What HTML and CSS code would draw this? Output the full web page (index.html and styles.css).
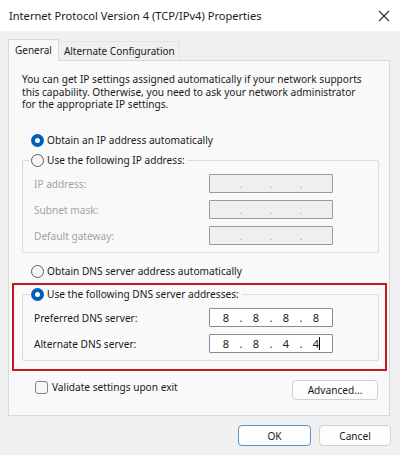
FILE: index.html
```html
<!DOCTYPE html>
<html lang="en">
<head>
<meta charset="utf-8">
<title>Internet Protocol Version 4 (TCP/IPv4) Properties</title>
<link rel="stylesheet" href="styles.css">
</head>
<body>
<div class="window">
  <div class="titlebar">
    <span class="title">Internet Protocol Version 4 (TCP/IPv4) Properties</span>
    <svg class="close" width="12" height="12" viewBox="0 0 12 12" aria-hidden="true">
      <path d="M1 1 L11 11 M11 1 L1 11" stroke="#2b2b2b" stroke-width="1.1" fill="none"/>
    </svg>
  </div>
  <div class="content">
    <div class="tabs">
      <div class="tab active">General</div>
      <div class="tab">Alternate Configuration</div>
    </div>
    <div class="panel">
      <p class="intro">You can get IP settings assigned automatically if your network supports<br>this capability. Otherwise, you need to ask your network administrator<br>for the appropriate IP settings.</p>

      <div class="radio-row ip-auto"><span class="radio checked"></span><span>Obtain an IP address automatically</span></div>

      <div class="group ip-group">
        <div class="legend"><span class="radio"></span><span>Use the following IP address:</span></div>
        <div class="fields">
          <div class="field disabled">
            <span class="field-label">IP address:</span>
            <div class="ipbox"><span class="seg"></span><span class="dot">.</span><span class="seg"></span><span class="dot">.</span><span class="seg"></span><span class="dot">.</span><span class="seg"></span></div>
          </div>
          <div class="field disabled">
            <span class="field-label">Subnet mask:</span>
            <div class="ipbox"><span class="seg"></span><span class="dot">.</span><span class="seg"></span><span class="dot">.</span><span class="seg"></span><span class="dot">.</span><span class="seg"></span></div>
          </div>
          <div class="field disabled">
            <span class="field-label">Default gateway:</span>
            <div class="ipbox"><span class="seg"></span><span class="dot">.</span><span class="seg"></span><span class="dot">.</span><span class="seg"></span><span class="dot">.</span><span class="seg"></span></div>
          </div>
        </div>
      </div>

      <div class="radio-row dns-auto"><span class="radio"></span><span>Obtain DNS server address automatically</span></div>

      <div class="group dns-group">
        <div class="legend"><span class="radio checked"></span><span>Use the following DNS server addresses:</span></div>
        <div class="fields">
          <div class="field">
            <span class="field-label">Preferred DNS server:</span>
            <div class="ipbox"><span class="seg">8</span><span class="dot">.</span><span class="seg">8</span><span class="dot">.</span><span class="seg">8</span><span class="dot">.</span><span class="seg">8</span></div>
          </div>
          <div class="field">
            <span class="field-label">Alternate DNS server:</span>
            <div class="ipbox"><span class="seg">8</span><span class="dot">.</span><span class="seg">8</span><span class="dot">.</span><span class="seg">4</span><span class="dot">.</span><span class="seg">4<span class="caret"></span></span></div>
          </div>
        </div>
      </div>

      <div class="bottom-row">
        <div class="check-row"><span class="checkbox"></span><span>Validate settings upon exit</span></div>
        <div class="btn advanced">Advanced...</div>
      </div>

      <div class="highlight"></div>
    </div>
    <div class="actions">
      <div class="btn primary">OK</div>
      <div class="btn">Cancel</div>
    </div>
  </div>
</div>
</body>
</html>
```

FILE: styles.css
```css
* { box-sizing: border-box; }

html, body {
  margin: 0;
  padding: 0;
}

body {
  width: 400px;
  height: 455px;
  overflow: hidden;
  background: #f0f0f0;
  font-family: "Noto Sans", "Open Sans", sans-serif;
  font-size: 10.15px;
  color: #1a1a1a;
}

.window {
  width: 400px;
  height: 455px;
  background: #f0f0f0;
}

.titlebar {
  height: 31px;
  background: #ffffff;
  display: flex;
  align-items: center;
  justify-content: space-between;
  padding: 0 10px 0 9px;
}

.title {
  font-size: 11.1px;
  color: #1a1a1a;
}

.close {
  display: block;
}

.content {
  padding: 8px 9px 0 8px;
}

.tabs {
  display: flex;
  align-items: flex-end;
  height: 21px;
}

.tab {
  height: 19px;
  padding: 0 4px 0 5px;
  display: flex;
  align-items: center;
  border: 1px solid #e3e3e3;
  border-bottom: none;
  border-left: none;
  background: #f0f0f0;
  font-size: 10px;
}

.tab.active {
  height: 22px;
  margin-bottom: -1px;
  padding: 0 6px 2px 6px;
  background: #f9f9f9;
  border-left: 1px solid #d9d9d9;
  border-color: #d9d9d9;
  position: relative;
  z-index: 1;
}

.panel {
  position: relative;
  width: 382px;
  height: 356px;
  background: #f9f9f9;
  border: 1px solid #d9d9d9;
}

.intro {
  margin: 0;
  padding: 12px 0 0 13px;
  line-height: 12.5px;
  white-space: nowrap;
}

.radio-row,
.legend,
.check-row {
  display: flex;
  align-items: center;
  height: 16px;
  gap: 3px;
  white-space: nowrap;
}

.radio {
  width: 13px;
  height: 13px;
  border-radius: 50%;
  border: 1px solid #5c5c5c;
  background: #f6f6f6;
  flex: none;
}

.radio.checked {
  border: none;
  background: #005fb8;
  position: relative;
}

.radio.checked::after {
  content: "";
  position: absolute;
  left: 4px;
  top: 4px;
  width: 5px;
  height: 5px;
  border-radius: 50%;
  background: #ffffff;
}

.ip-auto {
  margin: 21.5px 0 0 22px;
}

.dns-auto {
  margin: 10px 0 0 22px;
}

.group {
  margin-left: 13px;
  width: 357px;
  border: 1px solid #dcdcdc;
  border-radius: 2px;
}

.ip-group {
  margin-top: 12px;
  padding-bottom: 7px;
}

.dns-group {
  margin-top: 15px;
  padding-bottom: 7px;
}

.legend {
  width: fit-content;
  margin: -9px 0 0 7px;
  padding: 0 3px 0 1px;
  background: #f9f9f9;
}

.fields {
  display: flex;
  flex-direction: column;
  gap: 7px;
  margin-top: 6px;
  padding-left: 11px;
}

.field {
  display: grid;
  grid-template-columns: 175px 124px;
  align-items: center;
}

.field.disabled .field-label {
  color: #a3a3a3;
}

.ipbox {
  height: 19px;
  border: 1px solid #8c8c8c;
  border-radius: 1px;
  background: #ffffff;
  display: flex;
  align-items: center;
  padding-left: 5px;
  color: #1a1a1a;
  font-size: 11px;
}

.field.disabled .ipbox {
  background: #efefef;
  border-color: #9a9a9a;
  color: #9a9a9a;
}

.seg {
  width: 22px;
  text-align: center;
  line-height: 17px;
}

.dot {
  width: 8px;
  text-align: center;
  line-height: 17px;
}

.field.disabled .dot {
  font-size: 9px;
  line-height: 14px;
  padding-top: 3px;
}

.caret {
  display: inline-block;
  width: 1px;
  height: 13px;
  margin-right: -1px;
  background: #000000;
  vertical-align: -2px;
}

.bottom-row {
  display: flex;
  justify-content: space-between;
  align-items: flex-start;
  margin-top: 18px;
  padding: 0 11px 0 26px;
}

.check-row {
  gap: 4px;
}

.checkbox {
  width: 13px;
  height: 13px;
  border: 1px solid #858585;
  border-radius: 3px;
  background: #f6f6f6;
  flex: none;
}

.btn {
  height: 21px;
  display: flex;
  align-items: center;
  justify-content: center;
  border: 1px solid #d0d0d0;
  border-radius: 4px;
  background: #fdfdfd;
}

.advanced {
  width: 86px;
  margin-top: 1px;
  height: 20px;
}

.actions {
  display: flex;
  justify-content: flex-end;
  gap: 8px;
  margin-top: 9px;
}

.actions .btn {
  width: 72px;
}

.btn.primary {
  width: 73px;
  border-color: #5b93cc;
}

.highlight {
  position: absolute;
  left: 3px;
  top: 222px;
  width: 375px;
  height: 88px;
  border: 2px solid #c8161e;
}
```
